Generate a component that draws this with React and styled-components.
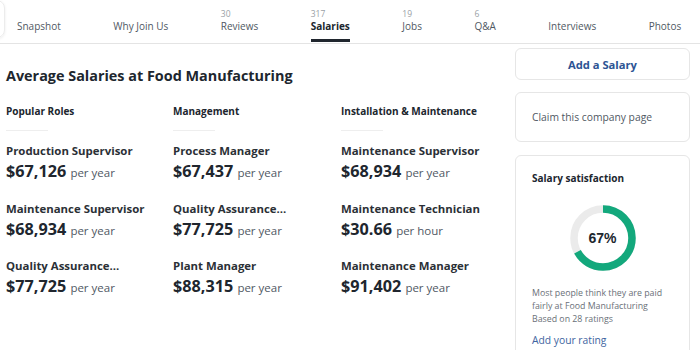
import React from "react";
import styled, { createGlobalStyle } from "styled-components";

const GlobalStyle = createGlobalStyle`
  *, *::before, *::after { box-sizing: border-box; }
  body {
    margin: 0;
    background: #fff;
    font-family: "Open Sans", "Liberation Sans", sans-serif;
    color: #20262e;
  }
`;

const Page = styled.div`
  width: 700px;
  height: 350px;
  overflow: hidden;
`;

const TabBar = styled.nav`
  display: flex;
  align-items: flex-end;
  gap: 52.5px;
  height: 44px;
  border-bottom: 1px solid #e4e4e4;
  overflow: hidden;
`;

const EdgeButton = styled.div`
  width: 14px;
  height: 38px;
  margin-left: -9px;
  margin-right: -40.5px;
  align-self: flex-start;
  border: 1px solid #ececec;
  border-radius: 0 8px 8px 0;
  box-shadow: 0 1px 3px rgba(0, 0, 0, 0.08);
`;

const Tab = styled.div`
  position: relative;
  display: flex;
  flex-direction: column;
  padding-bottom: 10px;
  flex-shrink: 0;
  color: ${(p) => (p.$active ? "#20262e" : "#505863")};
  font-weight: ${(p) => (p.$active ? 700 : 400)};
  font-size: 10px;
  line-height: 14px;

  &::after {
    content: "";
    display: ${(p) => (p.$active ? "block" : "none")};
    position: absolute;
    left: 0;
    right: 0;
    bottom: 1px;
    height: 3px;
    background: #20262e;
  }
`;

const Count = styled.span`
  font-size: 8.5px;
  line-height: 10px;
  font-weight: 400;
  color: #9a9fa6;
`;

const Main = styled.div`
  display: flex;
  gap: 4px;
`;

const Content = styled.section`
  width: 511px;
  padding-left: 6px;
`;

const Heading = styled.h1`
  margin: 22px 0 18px;
  font-size: 14.4px;
  line-height: 20px;
  font-weight: 700;
`;

const Columns = styled.div`
  display: grid;
  grid-template-columns: 167px 168px 168px;
`;

const Column = styled.div`
  display: flex;
  flex-direction: column;
`;

const ColumnTitle = styled.h2`
  margin: 0;
  font-size: 10px;
  line-height: 14px;
  font-weight: 700;
`;

const Rule = styled.div`
  width: 42px;
  height: 1px;
  background: #eeeeee;
  margin: 12px 0 11px;
`;

const Role = styled.div`
  height: 57.5px;
`;

const RoleName = styled.div`
  font-size: 11.4px;
  line-height: 17px;
  font-weight: 700;
  color: #2b3036;
`;

const Pay = styled.div`
  margin-top: 1px;
  font-size: 16.2px;
  line-height: 22px;
  font-weight: 700;
  color: #20262e;
`;

const Period = styled.span`
  font-size: 11.5px;
  font-weight: 400;
  color: #505863;
`;

const Sidebar = styled.aside`
  width: 175px;
  padding-top: 4px;
  display: flex;
  flex-direction: column;
  gap: 12px;
`;

const Card = styled.div`
  border: 1px solid #e6e6e6;
  border-radius: 6px;
  background: #fff;
  padding: ${(p) => p.$pad || "0 16px"};
  height: ${(p) => p.$h || "auto"};
  margin-top: ${(p) => p.$top || "0"};
  display: flex;
  flex-direction: column;
  justify-content: ${(p) => (p.$center ? "center" : "flex-start")};
  align-items: ${(p) => (p.$middle ? "center" : "stretch")};
`;

const AddSalary = styled.span`
  color: #2d5494;
  font-weight: 700;
  font-size: 11.2px;
`;

const CardText = styled.span`
  font-size: 10.3px;
  color: #505863;
`;

const CardTitle = styled.h3`
  margin: 0;
  font-size: 10px;
  font-weight: 700;
  line-height: 14px;
`;

const DonutWrap = styled.div`
  position: relative;
  width: 66px;
  height: 66px;
  margin: 20px auto 16px;
`;

const DonutLabel = styled.div`
  position: absolute;
  inset: 0;
  display: flex;
  align-items: center;
  justify-content: center;
  font-family: "Liberation Sans", Arial, sans-serif;
  font-weight: 700;
  font-size: 14px;
  color: #20262e;
`;

const Note = styled.p`
  margin: 0;
  font-size: 8.8px;
  line-height: 13px;
  color: #6a7078;
`;

const RatingLink = styled.a`
  display: block;
  margin-top: 7px;
  font-size: 10.3px;
  color: #3e64a0;
  text-decoration: none;
`;

const tabs = [
  { label: "Snapshot" },
  { label: "Why Join Us" },
  { label: "Reviews", count: "30" },
  { label: "Salaries", count: "317", active: true },
  { label: "Jobs", count: "19" },
  { label: "Q&A", count: "6" },
  { label: "Interviews" },
  { label: "Photos" },
];

const columns = [
  {
    title: "Popular Roles",
    roles: [
      ["Production Supervisor", "$67,126", "per year"],
      ["Maintenance Supervisor", "$68,934", "per year"],
      ["Quality Assurance...", "$77,725", "per year"],
    ],
  },
  {
    title: "Management",
    roles: [
      ["Process Manager", "$67,437", "per year"],
      ["Quality Assurance...", "$77,725", "per year"],
      ["Plant Manager", "$88,315", "per year"],
    ],
  },
  {
    title: "Installation & Maintenance",
    roles: [
      ["Maintenance Supervisor", "$68,934", "per year"],
      ["Maintenance Technician", "$30.66", "per hour"],
      ["Maintenance Manager", "$91,402", "per year"],
    ],
  },
];

function Donut({ value }) {
  const r = 29;
  const c = 2 * Math.PI * r;
  return (
    <DonutWrap>
      <svg width="66" height="66" viewBox="0 0 66 66">
        <circle cx="33" cy="33" r={r} fill="none" stroke="#ebebeb" strokeWidth="7.5" />
        <circle
          cx="33"
          cy="33"
          r={r}
          fill="none"
          stroke="#13a87c"
          strokeWidth="7.5"
          strokeDasharray={`${(c * value) / 100} ${c}`}
          transform="rotate(-90 33 33)"
        />
      </svg>
      <DonutLabel>{value}%</DonutLabel>
    </DonutWrap>
  );
}

export default function App() {
  return (
    <Page>
      <GlobalStyle />
      <TabBar>
        <EdgeButton />
        {tabs.map((t) => (
          <Tab key={t.label} $active={t.active}>
            {t.count && <Count>{t.count}</Count>}
            {t.label}
          </Tab>
        ))}
      </TabBar>
      <Main>
        <Content>
          <Heading>Average Salaries at Food Manufacturing</Heading>
          <Columns>
            {columns.map((col) => (
              <Column key={col.title}>
                <ColumnTitle>{col.title}</ColumnTitle>
                <Rule />
                {col.roles.map(([name, pay, period], i) => (
                  <Role key={i}>
                    <RoleName>{name}</RoleName>
                    <Pay>
                      {pay} <Period>{period}</Period>
                    </Pay>
                  </Role>
                ))}
              </Column>
            ))}
          </Columns>
        </Content>
        <Sidebar>
          <Card $h="32px" $center $middle>
            <AddSalary>Add a Salary</AddSalary>
          </Card>
          <Card $h="50px" $center>
            <CardText>Claim this company page</CardText>
          </Card>
          <Card $pad="15px 16px 10px" $h="220px" $top="1px">
            <CardTitle>Salary satisfaction</CardTitle>
            <Donut value={67} />
            <Note>
              Most people think they are paid
              <br />
              fairly at Food Manufacturing
              <br />
              Based on 28 ratings
            </Note>
            <RatingLink href="#">Add your rating</RatingLink>
          </Card>
        </Sidebar>
      </Main>
    </Page>
  );
}
